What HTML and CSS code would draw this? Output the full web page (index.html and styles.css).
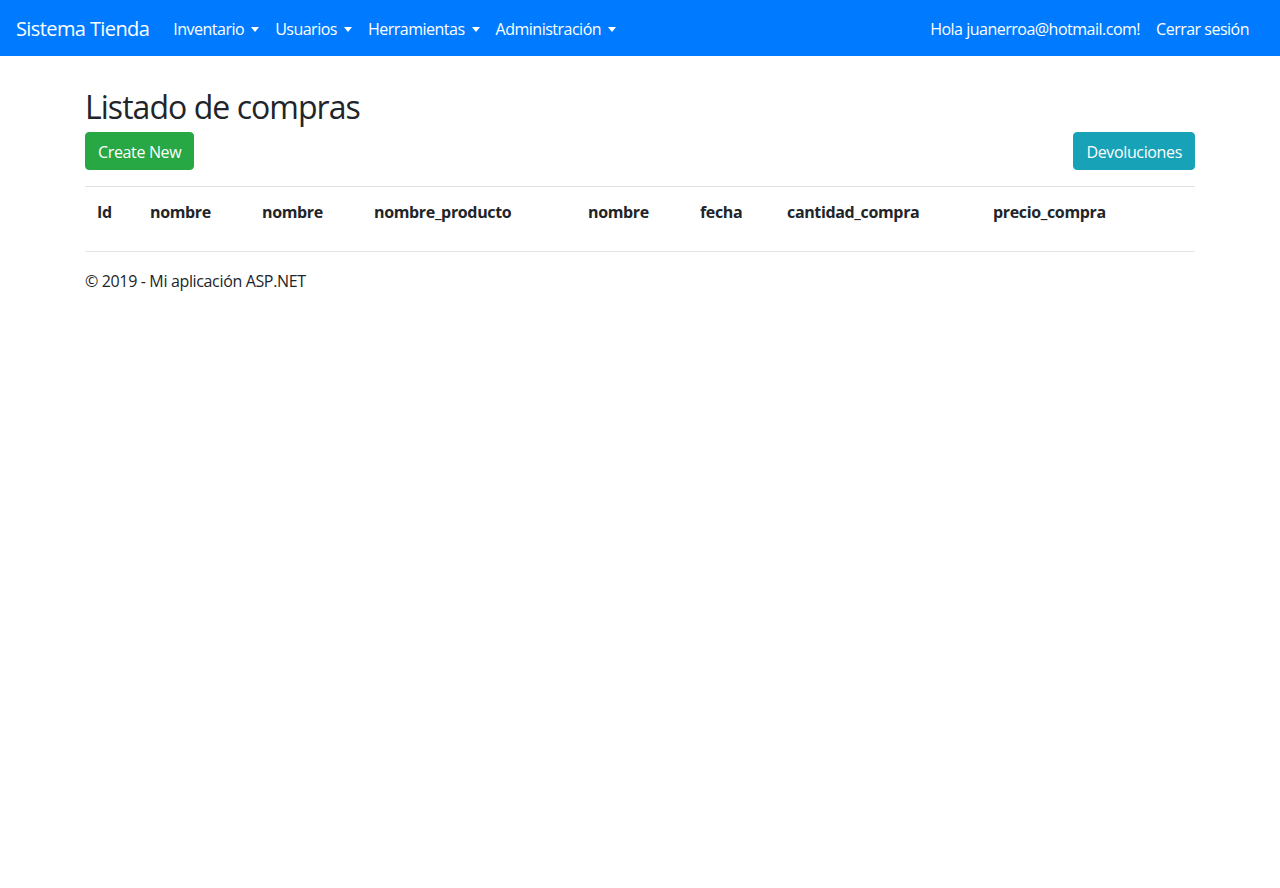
FILE: index.html
```html
<!DOCTYPE html>
<html lang="es">
<head>
<meta charset="utf-8">
<title>Listado de compras - Sistema Tienda</title>
<link rel="stylesheet" href="styles.css">
</head>
<body>
<nav class="navbar">
  <a class="brand" href="#">Sistema Tienda</a>
  <ul class="nav">
    <li><a class="nav-link dropdown" href="#">Inventario</a></li>
    <li><a class="nav-link dropdown" href="#">Usuarios</a></li>
    <li><a class="nav-link dropdown" href="#">Herramientas</a></li>
    <li><a class="nav-link dropdown" href="#">Administración</a></li>
  </ul>
  <ul class="nav nav-right">
    <li><a class="nav-link" href="#">Hola juanerroa@hotmail.com!</a></li>
    <li><a class="nav-link" href="#">Cerrar sesión</a></li>
  </ul>
</nav>
<div class="container">
  <h2 class="title">Listado de compras</h2>
  <div class="actions">
    <a class="btn btn-success" href="#">Create New</a>
    <a class="btn btn-info" href="#">Devoluciones</a>
  </div>
  <table class="table">
    <colgroup>
      <col class="c-id"><col class="c-md"><col class="c-md"><col class="c-lg"><col class="c-md"><col class="c-sm"><col class="c-cant"><col class="c-lg">
    </colgroup>
    <tr>
      <th>Id</th>
      <th>nombre</th>
      <th>nombre</th>
      <th>nombre_producto</th>
      <th>nombre</th>
      <th>fecha</th>
      <th>cantidad_compra</th>
      <th>precio_compra</th>
    </tr>
  </table>
  <hr class="rule">
  <footer class="footer">
    <p>&copy; 2019 - Mi aplicación ASP.NET</p>
  </footer>
</div>
</body>
</html>
```

FILE: styles.css
```css
* { box-sizing: border-box; }
html, body { margin: 0; padding: 0; }
body {
  font-family: "Segoe UI", "Open Sans", "Noto Sans", sans-serif;
  font-size: 16px;
  line-height: 1.5;
  color: #212529;
  background: #fff;
  letter-spacing: -0.35px;
}
a { text-decoration: none; }

.navbar {
  display: flex;
  align-items: center;
  height: 56px;
  padding: 8px 23px 8px 16px;
  background: #007bff;
}
.brand {
  color: #fff;
  font-size: 20px;
  line-height: 30px;
  padding: 6px 0 4px;
  margin-right: 16px;
  white-space: nowrap;
  letter-spacing: -0.6px;
}
.nav {
  display: flex;
  list-style: none;
  margin: 0;
  padding: 0;
}
.nav-right { margin-left: auto; }
.nav-link {
  display: block;
  color: #fff;
  padding: 9px 8px 7px;
  line-height: 24px;
  white-space: nowrap;
  letter-spacing: -0.5px;
}
.dropdown::after {
  content: "";
  display: inline-block;
  margin-left: 7px;
  vertical-align: 3px;
  border-top: 5px solid #fff;
  border-left: 4.5px solid transparent;
  border-right: 4.5px solid transparent;
}

.container {
  width: 1140px;
  margin: 0 auto;
  padding: 32px 15px 0;
}
.title {
  font-size: 32px;
  font-weight: 400;
  line-height: 38px;
  margin: 0 0 6px;
  letter-spacing: -0.03em;
}
.actions {
  display: flex;
  justify-content: space-between;
  margin-bottom: 16px;
}
.btn {
  display: inline-block;
  color: #fff;
  border: 1px solid transparent;
  border-radius: 4px;
  padding: 7px 12px 5px;
  line-height: 24px;
  font-size: 16px;
}
.btn-success { background: #28a745; border-color: #28a745; }
.btn-info { background: #17a2b8; border-color: #17a2b8; }

.table {
  width: 100%;
  table-layout: fixed;
  border-collapse: collapse;
  margin-bottom: 16px;
}
.table th {
  text-align: left;
  font-weight: 700;
  padding: 13px 12px 11px;
  line-height: 24px;
  border-top: 1px solid #dee2e6;
  vertical-align: top;
  white-space: nowrap;
}
.c-id { width: 53px; }
.c-md { width: 112px; }
.c-lg { width: 214px; }
.c-sm { width: 87px; }
.c-cant { width: 206px; }

.rule {
  border: 0;
  border-top: 1px solid rgba(0, 0, 0, 0.1);
  margin: 0 0 17px;
}
.footer p { margin: 0 0 16px; }
```
